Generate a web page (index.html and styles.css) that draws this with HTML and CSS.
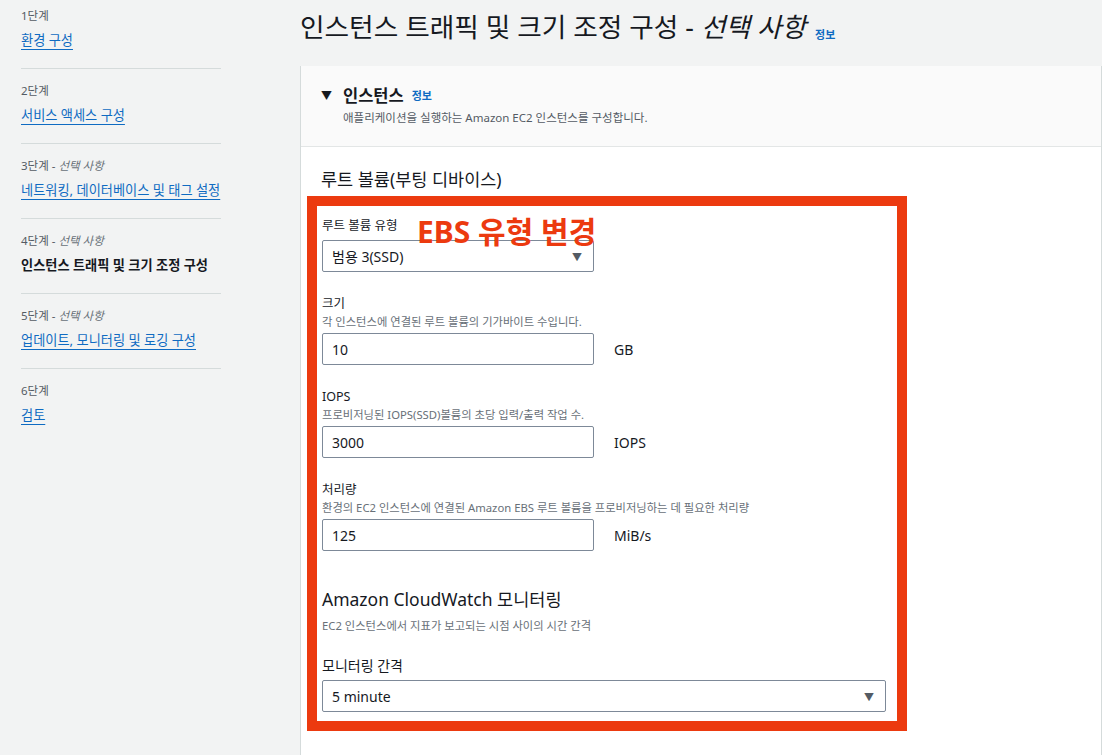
FILE: index.html
```html
<!DOCTYPE html>
<html lang="ko">
<head>
    <meta charset="UTF-8">
    <meta name="viewport" content="width=device-width, initial-scale=1.0">
    <title>인스턴스 트래픽 및 크기 조정 구성</title>
    <link rel="stylesheet" href="styles.css">
</head>
<body>
    <div class="layout">
        <nav class="steps">
            <div class="step">
                <div class="step-num">1단계</div>
                <a class="step-link" href="#">환경 구성</a>
            </div>
            <div class="step">
                <div class="step-num">2단계</div>
                <a class="step-link" href="#">서비스 액세스 구성</a>
            </div>
            <div class="step">
                <div class="step-num">3단계 - <i>선택 사항</i></div>
                <a class="step-link" href="#">네트워킹, 데이터베이스 및 태그 설정</a>
            </div>
            <div class="step">
                <div class="step-num">4단계 - <i>선택 사항</i></div>
                <span class="step-current">인스턴스 트래픽 및 크기 조정 구성</span>
            </div>
            <div class="step">
                <div class="step-num">5단계 - <i>선택 사항</i></div>
                <a class="step-link" href="#">업데이트, 모니터링 및 로깅 구성</a>
            </div>
            <div class="step">
                <div class="step-num">6단계</div>
                <a class="step-link" href="#">검토</a>
            </div>
        </nav>

        <main class="content">
            <h1 class="page-title">인스턴스 트래픽 및 크기 조정 구성 - <i>선택 사항</i> <a class="info" href="#">정보</a></h1>

            <section class="panel">
                <div class="panel-head">
                    <div class="panel-title">
                        <span class="caret">&#9660;</span>
                        <span>인스턴스</span>
                        <a class="info" href="#">정보</a>
                    </div>
                    <div class="panel-desc">애플리케이션을 실행하는 Amazon EC2 인스턴스를 구성합니다.</div>
                </div>

                <div class="panel-body">
                    <h2 class="sub-title">루트 볼륨(부팅 디바이스)</h2>

                    <div class="highlight">
                        <div class="note">EBS 유형 변경</div>

                        <div class="field first">
                            <div class="label">루트 볼륨 유형</div>
                            <div class="select short">
                                <span>범용 3(SSD)</span>
                                <span class="arrow">&#9660;</span>
                            </div>
                        </div>

                        <div class="field">
                            <div class="label">크기</div>
                            <div class="hint">각 인스턴스에 연결된 루트 볼륨의 기가바이트 수입니다.</div>
                            <div class="input-row">
                                <input class="text-input" type="text" value="10">
                                <span class="unit">GB</span>
                            </div>
                        </div>

                        <div class="field">
                            <div class="label">IOPS</div>
                            <div class="hint">프로비저닝된 IOPS(SSD)볼륨의 초당 입력/출력 작업 수.</div>
                            <div class="input-row">
                                <input class="text-input" type="text" value="3000">
                                <span class="unit">IOPS</span>
                            </div>
                        </div>

                        <div class="field">
                            <div class="label">처리량</div>
                            <div class="hint">환경의 EC2 인스턴스에 연결된 Amazon EBS 루트 볼륨을 프로비저닝하는 데 필요한 처리량</div>
                            <div class="input-row">
                                <input class="text-input" type="text" value="125">
                                <span class="unit">MiB/s</span>
                            </div>
                        </div>

                        <h2 class="sub-title cw">Amazon CloudWatch 모니터링</h2>
                        <div class="hint cw-hint">EC2 인스턴스에서 지표가 보고되는 시점 사이의 시간 간격</div>

                        <div class="field">
                            <div class="label big">모니터링 간격</div>
                            <div class="select">
                                <span>5 minute</span>
                                <span class="arrow">&#9660;</span>
                            </div>
                        </div>
                    </div>
                </div>
            </section>
        </main>
    </div>
</body>
</html>
```

FILE: styles.css
```css
body {
    margin: 0;
    padding: 0;
    font-family: "Noto Sans", "Noto Sans CJK KR", sans-serif;
    background-color: #f2f3f3;
    color: #16191f;
    overflow: hidden;
}
.layout {
    display: grid;
    grid-template-columns: 300px 1fr;
    height: 755px;
}

/* steps on the left */
.steps {
    padding-left: 21px;
}
.step {
    width: 200px;
    padding: 14px 0 18px;
    border-bottom: 1px solid #d5dbdb;
}
.step:first-child {
    padding-top: 8px;
}
.step:last-child {
    border-bottom: none;
}
.step-num {
    font-size: 11.5px;
    line-height: 16px;
    color: #545b64;
}
.step-num i {
    color: #687078;
}
.step-link,
.step-current {
    display: inline-block;
    margin-top: 6px;
    font-size: 13.2px;
    line-height: 20px;
    white-space: nowrap;
}
.step-link {
    color: #0f6bc2;
    text-decoration: underline;
    text-underline-offset: 4px;
    text-decoration-thickness: 1px;
}
.step-current {
    font-weight: bold;
    color: #16191f;
}

/* main */
.content {
    padding-top: 9px;
}
.page-title {
    margin: 0 0 13px;
    font-size: 26.7px;
    line-height: 36px;
    font-weight: normal;
    color: #16191f;
}
.info {
    font-size: 11px;
    font-weight: bold;
    color: #0f6bc2;
    text-decoration: none;
}
.page-title .info {
    vertical-align: -2px;
    margin-left: 2px;
}

.panel {
    background: #fff;
    border-left: 1px solid #d5dbdb;
    border-right: 1px solid #d5dbdb;
    min-height: 700px;
}
.panel-head {
    background: #fafafa;
    border-bottom: 1px solid #e3e6e6;
    padding: 20px;
}
.panel-title {
    display: flex;
    align-items: center;
    gap: 8px;
    font-size: 16.5px;
    font-weight: bold;
    line-height: 20px;
}
.caret {
    font-size: 11px;
    width: 14px;
    color: #16191f;
}
.panel-desc {
    margin-left: 22px;
    margin-top: 4px;
    font-size: 11.5px;
    line-height: 16px;
    color: #545b64;
}

.panel-body {
    padding: 20px 20px 0;
}
.sub-title {
    margin: 0;
    font-size: 17.5px;
    line-height: 24px;
    font-weight: normal;
}

/* red annotation box */
.highlight {
    position: relative;
    width: 600px;
    box-sizing: border-box;
    margin: 5px 0 0 -14px;
    border: 10px solid #ec3a0f;
    padding: 10px 11px 9px 5px;
}
.note {
    position: absolute;
    left: 100px;
    top: 8px;
    font-size: 30px;
    font-weight: bold;
    line-height: 36px;
    color: #ec3a0f;
}

.field {
    margin-top: 22px;
}
.field.first {
    margin-top: 0;
}
.label {
    font-size: 12.5px;
    line-height: 20px;
    color: #16191f;
}
.label.big {
    font-size: 14px;
}
.hint {
    font-size: 11.3px;
    line-height: 16px;
    color: #687078;
}
.select {
    margin-top: 4px;
    height: 32px;
    box-sizing: border-box;
    border: 1px solid #7d8998;
    border-radius: 2px;
    display: flex;
    align-items: center;
    justify-content: space-between;
    padding: 0 11px 0 9px;
    font-size: 14px;
    background: #fff;
}
.select.short {
    width: 272px;
}
.arrow {
    font-size: 10px;
    color: #545b64;
}
.input-row {
    margin-top: 3px;
    display: flex;
    align-items: center;
    gap: 20px;
}
.text-input {
    width: 272px;
    height: 32px;
    box-sizing: border-box;
    border: 1px solid #7d8998;
    border-radius: 2px;
    padding: 0 9px;
    font-family: inherit;
    font-size: 14px;
    color: #16191f;
}
.unit {
    font-size: 14px;
}

.sub-title.cw {
    margin-top: 36px;
}
.cw-hint {
    margin-top: 7px;
}
```
